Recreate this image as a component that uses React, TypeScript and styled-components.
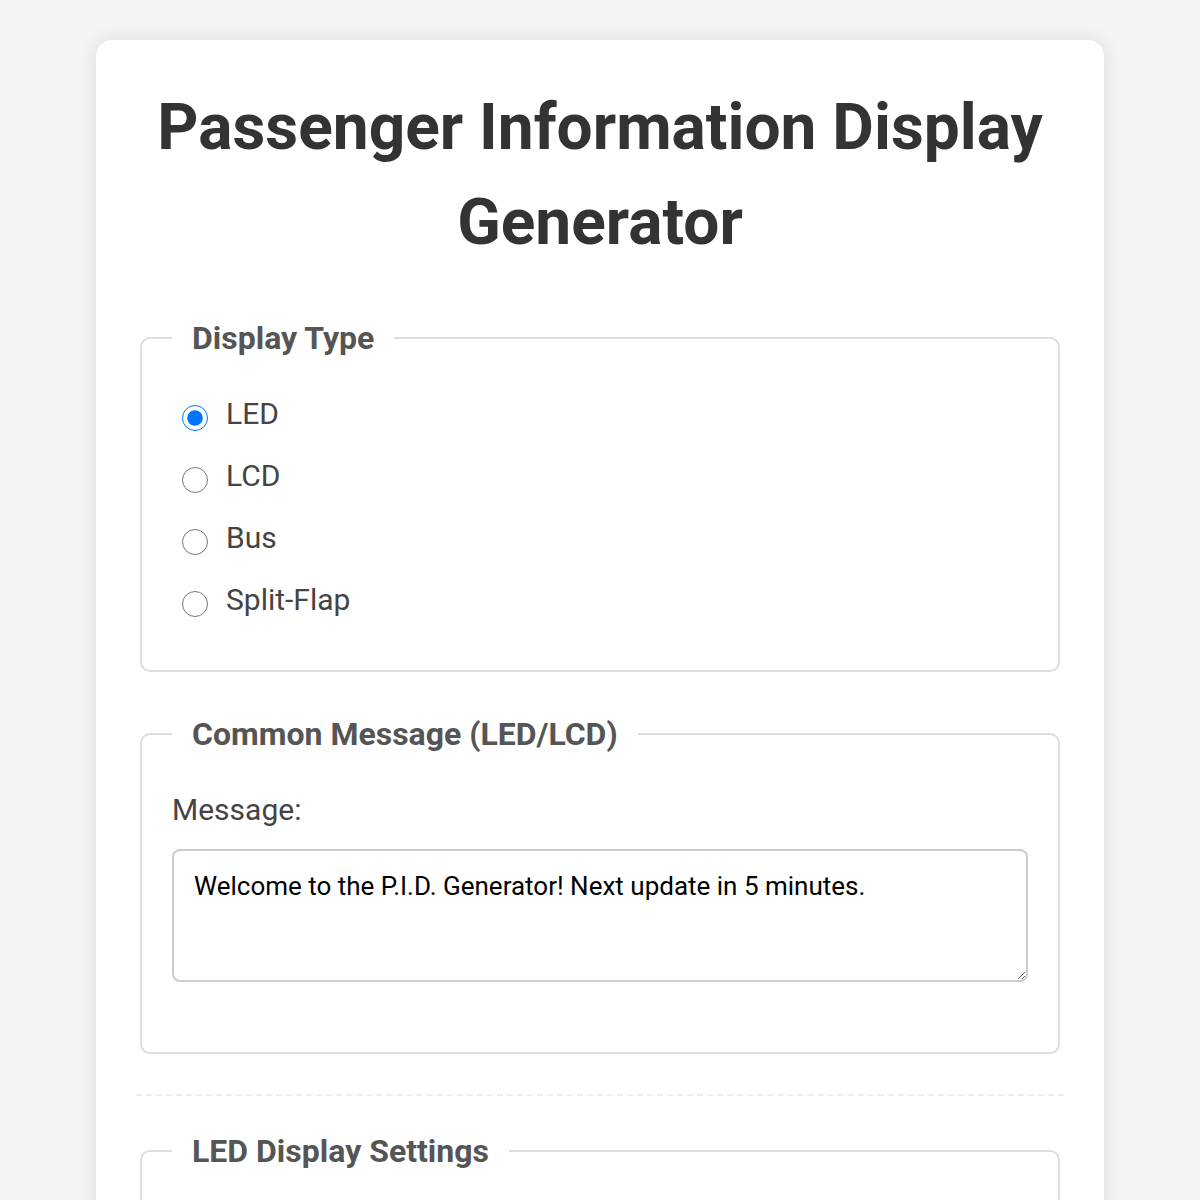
import React, { useState } from "react";
import styled, { createGlobalStyle } from "styled-components";

const GlobalStyle = createGlobalStyle`
  html, body {
    margin: 0;
    padding: 0;
    background: #f4f4f4;
  }
  body {
    font-family: Roboto, "Liberation Sans", Arial, sans-serif;
    color: #333;
  }
`;

const Page = styled.div`
  padding: 40px 96px;
`;

const Card = styled.div`
  background: #fff;
  border-radius: 16px;
  box-shadow: 0 0 20px rgba(0, 0, 0, 0.1);
  padding: 40px;
`;

const Title = styled.h1`
  margin: 0 0 46px;
  text-align: center;
  font-size: 64px;
  line-height: 95px;
  font-weight: 700;
  color: #333;
`;

const Group = styled.fieldset`
  margin: 0 4px 40px;
  padding: 10px 30px 50px;
  border: 2px solid #ddd;
  border-radius: 10px;
`;

const Legend = styled.legend`
  padding: 0 20px;
  font-size: 32px;
  line-height: 44px;
  font-weight: 700;
  color: #555;
`;

const RadioList = styled.div`
  display: flex;
  flex-direction: column;
  gap: 20px;
  padding-top: 22px;
`;

const RadioRow = styled.label`
  display: flex;
  align-items: center;
  height: 42px;
  font-size: 30px;
  color: #444;
  cursor: pointer;
`;

const Radio = styled.input`
  width: 26px;
  height: 26px;
  margin: 10px 18px 0 10px;
  accent-color: #0075ff;
`;

const FieldLabel = styled.label`
  display: block;
  margin: 23px 0 18px;
  font-size: 30px;
  line-height: 42px;
  color: #444;
`;

const MessageBox = styled.textarea`
  display: block;
  box-sizing: border-box;
  width: 100%;
  height: 133px;
  margin: 0 0 20px;
  padding: 20px;
  border: 2px solid #ccc;
  border-radius: 8px;
  font-family: Roboto, "Liberation Sans", Arial, sans-serif;
  font-size: 26px;
  line-height: 30px;
  color: #000;
  resize: vertical;
`;

const Divider = styled.div`
  margin: 0 0 33px;
  border-top: 2px dashed #eee;
`;

const Spacer = styled.div`
  height: 120px;
`;

const types = ["LED", "LCD", "Bus", "Split-Flap"];

export default function App() {
  const [kind, setKind] = useState("LED");
  const [message, setMessage] = useState(
    "Welcome to the P.I.D. Generator! Next update in 5 minutes."
  );

  return (
    <>
      <GlobalStyle />
      <Page>
        <Card>
          <Title>Passenger Information Display Generator</Title>

          <Group>
            <Legend>Display Type</Legend>
            <RadioList>
              {types.map((t) => (
                <RadioRow key={t}>
                  <Radio
                    type="radio"
                    name="displayType"
                    checked={kind === t}
                    onChange={() => setKind(t)}
                  />
                  {t}
                </RadioRow>
              ))}
            </RadioList>
          </Group>

          <Group>
            <Legend>Common Message (LED/LCD)</Legend>
            <FieldLabel htmlFor="msg">Message:</FieldLabel>
            <MessageBox
              id="msg"
              value={message}
              onChange={(e) => setMessage(e.target.value)}
            />
          </Group>

          <Divider />

          <Group>
            <Legend>LED Display Settings</Legend>
            <Spacer />
          </Group>
        </Card>
      </Page>
    </>
  );
}
